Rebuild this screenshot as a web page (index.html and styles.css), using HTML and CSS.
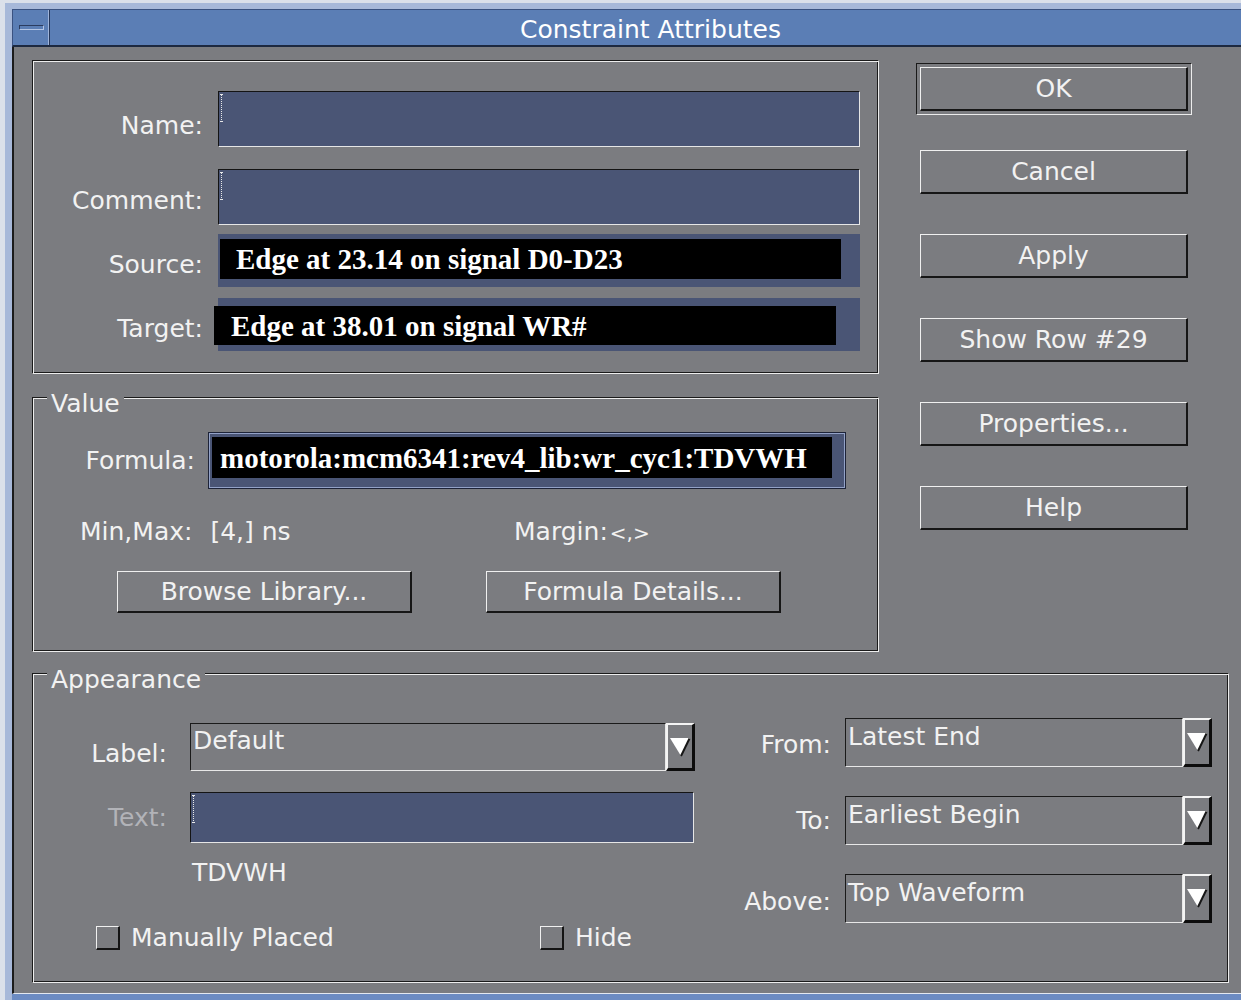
FILE: index.html
```html
<!DOCTYPE html>
<html lang="en">
<head>
<meta charset="utf-8">
<title>Constraint Attributes</title>
<link rel="stylesheet" href="styles.css">
</head>
<body>
<div class="window">
  <div class="titlebar">
    <div class="menu-btn"><span class="menu-dash"></span></div>
    <div class="title">Constraint Attributes</div>
  </div>

  <div class="client">
    <div class="upper">
      <div class="left-col">
        <!-- identity of the constraint -->
        <div class="group ident">
          <div class="field-row">
            <label class="field-label label-name">Name:</label>
            <div class="text-input"><span class="caret"></span></div>
          </div>
          <div class="field-row row-comment">
            <label class="field-label">Comment:</label>
            <div class="text-input"><span class="caret"></span></div>
          </div>
          <div class="field-row row-source">
            <label class="field-label">Source:</label>
            <div class="readout readout-source">
              <div class="readout-value">Edge at 23.14 on signal D0-D23</div>
            </div>
          </div>
          <div class="field-row row-target">
            <label class="field-label">Target:</label>
            <div class="readout readout-target">
              <div class="readout-value">Edge at 38.01 on signal WR#</div>
            </div>
          </div>
        </div>

        <!-- value -->
        <div class="group value">
          <span class="group-title">Value</span>
          <div class="field-row formula-row">
            <label class="field-label formula-label">Formula:</label>
            <div class="formula-input">
              <div class="formula-value">motorola:mcm6341:rev4_lib:wr_cyc1:TDVWH</div>
            </div>
          </div>
          <div class="limits">
            <div class="minmax">Min,Max:<span class="minmax-val">[4,] ns</span></div>
            <div class="margin">Margin:<span class="margin-val">&lt;,&gt;</span></div>
          </div>
          <div class="value-buttons">
            <button class="btn btn-wide">Browse Library...</button>
            <button class="btn btn-wide">Formula Details...</button>
          </div>
        </div>
      </div>

      <!-- dialog actions -->
      <div class="actions">
        <div class="default-frame"><button class="btn">OK</button></div>
        <button class="btn btn-cancel">Cancel</button>
        <button class="btn">Apply</button>
        <button class="btn">Show Row #29</button>
        <button class="btn">Properties...</button>
        <button class="btn">Help</button>
      </div>
    </div>

    <!-- appearance -->
    <div class="group appearance">
      <span class="group-title">Appearance</span>
      <div class="appear-left">
        <div class="app-row row-label">
          <label class="app-label label-label">Label:</label>
          <div class="dropdown dd-label">
            <div class="dd-field">Default</div>
            <div class="dd-arrow">
              <svg width="22" height="20" viewBox="0 0 22 20"><polygon points="1,1 21,1 12,19" fill="#fff"/><line x1="20.5" y1="1.5" x2="12" y2="19" stroke="#161616" stroke-width="2"/></svg>
            </div>
          </div>
        </div>
        <div class="app-row row-text">
          <label class="app-label disabled">Text:</label>
          <div class="text-input text-wide"><span class="caret"></span></div>
        </div>
        <div class="label-preview">TDVWH</div>
        <div class="checks">
          <div class="check"><span class="check-box"></span><span class="check-text">Manually Placed</span></div>
          <div class="check"><span class="check-box"></span><span class="check-text">Hide</span></div>
        </div>
      </div>

      <div class="appear-right">
        <div class="app-row right-row">
          <label class="app-label right-label">From:</label>
          <div class="dropdown dd-right">
            <div class="dd-field">Latest End</div>
            <div class="dd-arrow">
              <svg width="22" height="20" viewBox="0 0 22 20"><polygon points="1,1 21,1 12,19" fill="#fff"/><line x1="20.5" y1="1.5" x2="12" y2="19" stroke="#161616" stroke-width="2"/></svg>
            </div>
          </div>
        </div>
        <div class="app-row right-row">
          <label class="app-label right-label label-to">To:</label>
          <div class="dropdown dd-right">
            <div class="dd-field">Earliest Begin</div>
            <div class="dd-arrow">
              <svg width="22" height="20" viewBox="0 0 22 20"><polygon points="1,1 21,1 12,19" fill="#fff"/><line x1="20.5" y1="1.5" x2="12" y2="19" stroke="#161616" stroke-width="2"/></svg>
            </div>
          </div>
        </div>
        <div class="app-row right-row">
          <label class="app-label right-label label-above">Above:</label>
          <div class="dropdown dd-right">
            <div class="dd-field">Top Waveform</div>
            <div class="dd-arrow">
              <svg width="22" height="20" viewBox="0 0 22 20"><polygon points="1,1 21,1 12,19" fill="#fff"/><line x1="20.5" y1="1.5" x2="12" y2="19" stroke="#161616" stroke-width="2"/></svg>
            </div>
          </div>
        </div>
      </div>
    </div>
  </div>
  <div class="window-foot"></div>
</div>
</body>
</html>
```

FILE: styles.css
```css
* { box-sizing: border-box; }

html, body {
  margin: 0;
  height: 100%;
}

body {
  background: #dbe0ea;
  font-family: "DejaVu Sans", sans-serif;
  font-size: 25px;
  color: #f2f2f2;
  overflow: hidden;
}

/* ---------- window frame ---------- */
.window {
  margin: 3px 0 0 5px;
  height: 997px;
  border-top: 6px solid #a7b8d9;
  border-left: 7px solid #a7b8d9;
  display: flex;
  flex-direction: column;
}

.titlebar {
  flex: none;
  height: 38px;
  display: flex;
  background: #5b7eb5;
  border-top: 1px solid #3a5281;
  border-left: 1px solid #3a5281;
  border-bottom: 2px solid #1d2940;
}

.menu-btn {
  width: 37px;
  border-right: 1px solid #24365a;
  box-shadow: inset -1px 0 #9fb4da;
  display: flex;
  align-items: center;
  justify-content: center;
}

.menu-dash {
  width: 25px;
  height: 5px;
  border: 1px solid;
  border-color: #2b3c60 #b3c4e4 #b3c4e4 #2b3c60;
}

.title {
  flex: 1;
  text-align: center;
  line-height: 35px;
  padding: 2px 0 0 10px;
  color: #fff;
}

.client {
  flex: 1;
  background: #7b7c80;
  border-left: 2px solid #1b1b1b;
  border-bottom: 1px solid #e4e8f0;
  padding: 13px 0 0 18px;
}

.window-foot {
  flex: none;
  height: 6px;
  background: #6c8bc2;
}

/* ---------- etched groups ---------- */
.group {
  position: relative;
  border: 1px solid;
  border-color: #1a1a1a #ededed #ededed #1a1a1a;
  box-shadow: inset 1px 1px #ededed, inset -1px -1px #1a1a1a;
}

.group-title {
  position: absolute;
  top: -7px;
  left: 14px;
  padding: 0 4px;
  line-height: 26px;
  background: #7b7c80;
}

.upper {
  display: flex;
  gap: 37px;
}

.left-col {
  width: 847px;
  display: flex;
  flex-direction: column;
}

/* ---------- identity rows ---------- */
.ident {
  height: 314px;
  padding: 30px 0 0 1px;
}

.field-row {
  display: flex;
  align-items: center;
  gap: 15px;
}

.row-comment { margin-top: 22px; }
.row-source { margin-top: 9px; }
.row-target { margin-top: 11px; }

.field-label {
  flex: none;
  width: 169px;
  text-align: right;
  line-height: 26px;
  padding-top: 8px;
}

.label-name { padding-top: 14px; }

.text-input {
  width: 642px;
  height: 56px;
  background: #4a5575;
  border: 1px solid;
  border-color: #141414 #e6e6e6 #e6e6e6 #141414;
  padding: 2px 0 0 1px;
}

/* dotted I-beam of an empty text field */
.caret {
  display: block;
  width: 3px;
  height: 28px;
  background: repeating-linear-gradient(to bottom, #e8e8e8 0 1px, transparent 1px 2px) no-repeat 1px 0 / 1px 100%;
  border-top: 1px solid #e8e8e8;
  border-bottom: 1px solid #e8e8e8;
}

.readout {
  width: 642px;
  height: 53px;
  background: #4a5575;
}

.readout-source { padding: 5px 0 0 2px; }
.readout-target { padding: 8px 0 0 0; }

.readout-value {
  background: #000;
  color: #fff;
  font: bold 29px/40px "Liberation Serif", serif;
  white-space: nowrap;
}

.readout-source .readout-value {
  width: 621px;
  height: 40px;
  padding-left: 16px;
}

.readout-target .readout-value {
  width: 622px;
  height: 39px;
  line-height: 40px;
  margin-left: -4px;
  padding-left: 17px;
}

/* ---------- value group ---------- */
.value {
  margin-top: 23px;
  height: 255px;
  padding: 34px 0 0 1px;
}

.formula-row { gap: 13px; }

.formula-label {
  width: 161px;
  padding-top: 0;
}

.formula-input {
  width: 638px;
  height: 57px;
  background: #4a5575;
  border: 1px solid #1d2338;
  box-shadow: inset 0 0 0 1px #93a2c8;
  padding: 4px 0 0 3px;
}

.formula-value {
  width: 620px;
  height: 41px;
  background: #000;
  color: #fff;
  font: bold 29px/42px "Liberation Serif", serif;
  padding-left: 8px;
  white-space: nowrap;
}

.limits {
  display: flex;
  margin-top: 29px;
  padding-left: 46px;
  line-height: 28px;
  height: 28px;
}

.minmax { width: 434px; }
.minmax-val { margin-left: 18px; }
.margin-val { font-size: 20px; margin-left: 2px; }

.value-buttons {
  display: flex;
  gap: 74px;
  margin-top: 25px;
  padding-left: 83px;
}

/* ---------- buttons ---------- */
.btn {
  width: 268px;
  height: 44px;
  padding: 0;
  background: #7b7c80;
  color: #f2f2f2;
  font: 25px "DejaVu Sans", sans-serif;
  border-style: solid;
  border-width: 1px 2px 2px 1px;
  border-color: #f0f0f0 #161616 #161616 #f0f0f0;
  display: flex;
  align-items: center;
  justify-content: center;
}

.btn-wide {
  width: 295px;
  height: 42px;
}

.actions {
  width: 276px;
  display: flex;
  flex-direction: column;
  align-items: center;
  padding-top: 3px;
}

.default-frame {
  width: 276px;
  height: 52px;
  padding: 3px;
  border: 1px solid;
  border-color: #1a1a1a #ededed #ededed #1a1a1a;
}

.actions > .btn { margin-top: 40px; }
.actions > .btn-cancel { margin-top: 35px; }

/* ---------- appearance group ---------- */
.appearance {
  margin-top: 21px;
  width: 1197px;
  height: 310px;
  display: flex;
  justify-content: space-between;
  padding: 0 16px 0 1px;
}

.appear-left {
  width: 662px;
  padding-top: 49px;
}

.appear-right {
  width: 477px;
  padding-top: 44px;
  display: flex;
  flex-direction: column;
  gap: 29px;
}

.app-row {
  display: flex;
  align-items: center;
  gap: 23px;
}

.app-label {
  flex: none;
  width: 133px;
  text-align: right;
  line-height: 26px;
}

.label-label { padding-top: 14px; }

.disabled { color: #b2b3b8; }

.row-text { margin-top: 21px; }

.text-wide {
  width: 504px;
  height: 51px;
}

.label-preview {
  margin-top: 16px;
  padding-left: 158px;
  line-height: 28px;
}

.checks {
  display: flex;
  margin-top: 39px;
  padding-left: 62px;
}

.check {
  display: flex;
  align-items: center;
  line-height: 24px;
}

.check:first-child { width: 444px; }

.check-box {
  width: 24px;
  height: 24px;
  border-style: solid;
  border-width: 1px 2px 2px 1px;
  border-color: #f0f0f0 #141414 #141414 #f0f0f0;
}

.check-text { margin-left: 11px; }

.right-row { gap: 14px; }

.right-label { width: 96px; padding-top: 4px; }
.right-label.label-to { padding-top: 0; }
.right-label.label-above { padding-top: 6px; }

/* ---------- option menus ---------- */
.dropdown {
  display: flex;
}

.dd-label {
  width: 505px;
  height: 48px;
}

.dd-right {
  width: 367px;
  height: 49px;
}

.dd-field {
  flex: 1;
  border: 1px solid;
  border-color: #1a1a1a #e8e8e8 #e8e8e8 #1a1a1a;
  padding: 4px 0 0 2px;
  line-height: 26px;
  white-space: nowrap;
}

.dd-right .dd-field { padding-top: 5px; }

.dd-arrow {
  width: 29px;
  flex: none;
  border-style: solid;
  border-width: 2px 3px 3px 2px;
  border-color: #f4f4f4 #0c0c0c #0c0c0c #f4f4f4;
  display: flex;
  align-items: center;
  justify-content: center;
}

.dd-arrow svg { display: block; }
```
